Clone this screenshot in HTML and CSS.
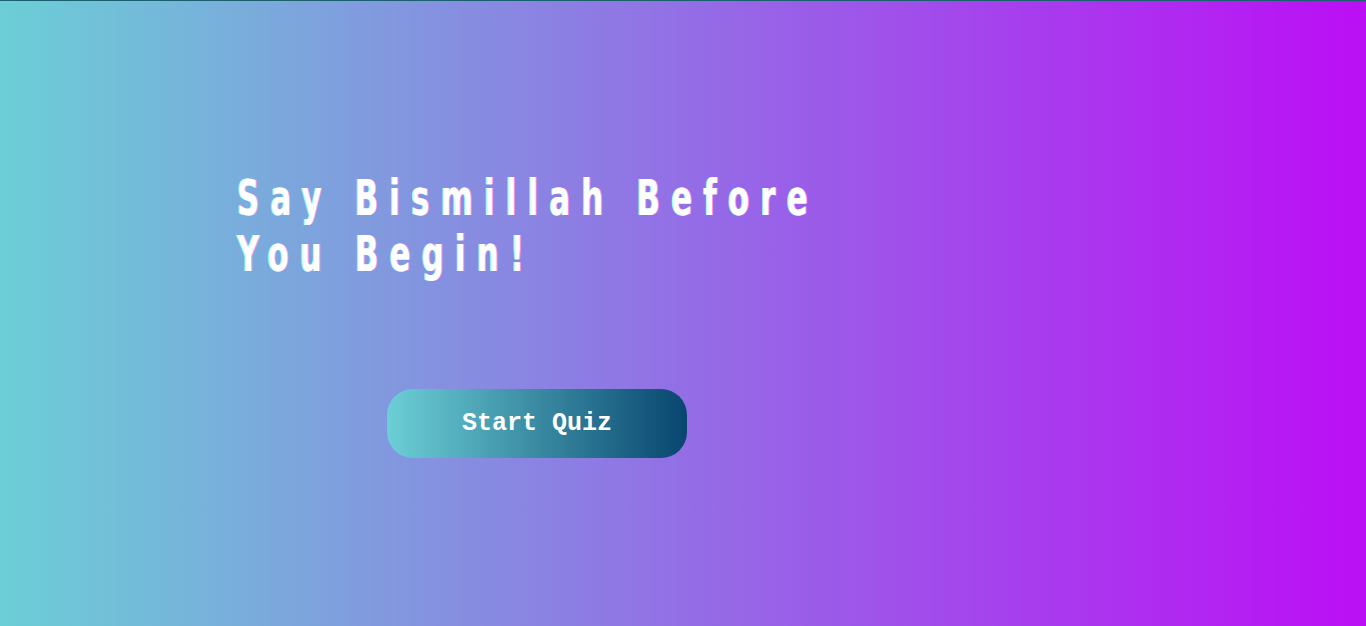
FILE: index.html
```html
<!DOCTYPE html>
<html>
<head>
<meta charset="utf-8">
<link rel="stylesheet" href="styles.css">
</head>
<body>
<main class="page">
  <h1 class="title">Say Bismillah Before<br>You Begin!</h1>
  <div class="actions">
    <button class="start">Start Quiz</button>
  </div>
</main>
</body>
</html>
```
FILE: styles.css
```css
html, body {
  margin: 0;
  padding: 0;
  height: 100%;
}
body {
  border-top: 1px solid #1a5f6e;
  box-sizing: border-box;
  background: linear-gradient(to right, #6bcfd6 0%, #bb0ef5 100%);
  overflow: hidden;
}
.page {
  padding: 170px 0 0 237px;
}
.title {
  display: inline-block;
  margin: 0;
  font-family: "DejaVu Sans", sans-serif;
  font-stretch: condensed;
  font-weight: 700;
  font-size: 49px;
  line-height: 56px;
  letter-spacing: 16px;
  color: #fff;
  text-shadow: -1px 0 #8ff, 1px 0 #f9d;
  transform: scaleX(0.7);
  transform-origin: left top;
}
.actions {
  padding: 106px 0 0 150px;
}
.start {
  width: 300px;
  height: 69px;
  border: none;
  border-radius: 26px;
  background: linear-gradient(to right, #6ccfd6, #08466f);
  color: #fff;
  font-family: "Courier New", "Liberation Mono", monospace;
  font-weight: 700;
  font-size: 25px;
  letter-spacing: 0;
  cursor: pointer;
}
```
